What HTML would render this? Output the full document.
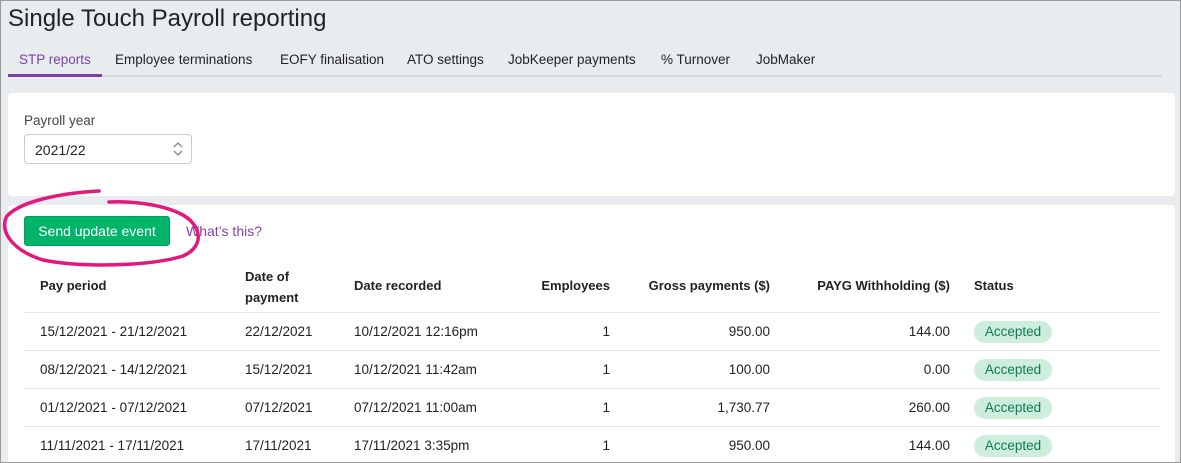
<!DOCTYPE html>
<html style="overflow:hidden"><head><style>
*{box-sizing:border-box;margin:0;padding:0}
html,body{width:1181px;height:463px;overflow:hidden}
#w{position:absolute;left:0;top:0;width:1181px;height:463px;overflow:hidden;background:#e9ecef;font-family:"Liberation Sans",sans-serif;color:#222;border:1px solid #9a9a9a}
.t{position:absolute;white-space:nowrap}
h1{position:absolute;left:7px;top:4px;font-size:24px;font-weight:normal;color:#222}
.tab{position:absolute;top:51px;font-size:13.5px;color:#222}
.card{position:absolute;background:#fff;border-radius:4px;left:7px;right:5px}
.th{position:absolute;font-size:13px;font-weight:bold;color:#222}
.td{position:absolute;font-size:13.5px;color:#222}
.r{text-align:right}
.badge{position:absolute;left:973px;width:78px;height:22px;border-radius:11px;background:#cdeedd;color:#0f7a54;font-size:13.5px;text-align:center;line-height:22px}
.line{position:absolute;left:23px;width:1136px;height:1px;background:#e4e6e8}
</style></head><body><div id="w">
<h1>Single Touch Payroll reporting</h1>
<div class="tab" style="left:18px;color:#7b3fa8">STP reports</div>
<div class="tab" style="left:114px">Employee terminations</div>
<div class="tab" style="left:279px">EOFY finalisation</div>
<div class="tab" style="left:406px">ATO settings</div>
<div class="tab" style="left:507px">JobKeeper payments</div>
<div class="tab" style="left:660px">% Turnover</div>
<div class="tab" style="left:755px">JobMaker</div>
<div style="position:absolute;left:7px;top:74px;width:1154px;height:2px;background:#d6d9dc"></div>
<div style="position:absolute;left:7px;top:73px;width:94px;height:3px;background:#7b3fa8"></div>

<div class="card" style="top:92px;height:103px">
<div class="t" style="left:16px;top:20px;font-size:13.5px;color:#444">Payroll year</div>
<div style="position:absolute;left:16px;top:41px;width:168px;height:30px;border:1px solid #c8cbce;border-radius:4px;font-size:14px;padding:7px 0 0 10px">2021/22
<svg style="position:absolute;right:8px;top:7px" width="10" height="14" viewBox="0 0 10 14"><path d="M1 5L5 1L9 5M1 9L5 13L9 9" fill="none" stroke="#888" stroke-width="1.3"/></svg></div>
</div>

<div class="card" style="top:204px;height:270px">
<div style="position:absolute;left:16px;top:11px;width:146px;height:30px;background:#00b46a;border:1px solid #00a05e;border-radius:3px;color:#fff;font-size:14px;text-align:center;line-height:28px">Send update event</div>
<div class="t" style="left:178px;top:18px;font-size:14px;color:#8a3fb0">What’s this?</div>
</div>

<div class="th" style="left:39px;top:277px">Pay period</div>
<div class="th" style="left:244px;top:265px;line-height:21px">Date of<br>payment</div>
<div class="th" style="left:353px;top:277px">Date recorded</div>
<div class="th r" style="left:509px;width:100px;top:277px">Employees</div>
<div class="th r" style="left:599px;width:170px;top:277px">Gross payments ($)</div>
<div class="th r" style="left:779px;width:170px;top:277px">PAYG Withholding ($)</div>
<div class="th" style="left:973px;top:277px">Status</div>
<div class="line" style="top:311px"></div>
<div class="line" style="top:349px"></div>
<div class="line" style="top:387px"></div>
<div class="line" style="top:425px"></div>

<div class="td" style="left:39px;top:323px">15/12/2021 - 21/12/2021</div><div class="td" style="left:244px;top:323px">22/12/2021</div><div class="td" style="left:353px;top:323px">10/12/2021 12:16pm</div><div class="td r" style="left:509px;width:100px;top:323px">1</div><div class="td r" style="left:599px;width:170px;top:323px">950.00</div><div class="td r" style="left:779px;width:170px;top:323px">144.00</div><div class="badge" style="top:320px">Accepted</div>

<div class="td" style="left:39px;top:361px">08/12/2021 - 14/12/2021</div><div class="td" style="left:244px;top:361px">15/12/2021</div><div class="td" style="left:353px;top:361px">10/12/2021 11:42am</div><div class="td r" style="left:509px;width:100px;top:361px">1</div><div class="td r" style="left:599px;width:170px;top:361px">100.00</div><div class="td r" style="left:779px;width:170px;top:361px">0.00</div><div class="badge" style="top:358px">Accepted</div>

<div class="td" style="left:39px;top:399px">01/12/2021 - 07/12/2021</div><div class="td" style="left:244px;top:399px">07/12/2021</div><div class="td" style="left:353px;top:399px">07/12/2021 11:00am</div><div class="td r" style="left:509px;width:100px;top:399px">1</div><div class="td r" style="left:599px;width:170px;top:399px">1,730.77</div><div class="td r" style="left:779px;width:170px;top:399px">260.00</div><div class="badge" style="top:396px">Accepted</div>

<div class="td" style="left:39px;top:437px">11/11/2021 - 17/11/2021</div><div class="td" style="left:244px;top:437px">17/11/2021</div><div class="td" style="left:353px;top:437px">17/11/2021 3:35pm</div><div class="td r" style="left:509px;width:100px;top:437px">1</div><div class="td r" style="left:599px;width:170px;top:437px">950.00</div><div class="td r" style="left:779px;width:170px;top:437px">144.00</div><div class="badge" style="top:434px">Accepted</div>

<svg style="position:absolute;left:0;top:185px" width="210" height="85" viewBox="0 0 210 85">
<path d="M98 5C60 7 20 15 6 30C-2 44 10 64 42 74C82 82 150 80 182 70C205 60 200 38 180 28C160 18 130 15 108 16" fill="none" stroke="#e2197c" stroke-width="3.5" stroke-linecap="round"/>
</svg>
</div></body></html>
